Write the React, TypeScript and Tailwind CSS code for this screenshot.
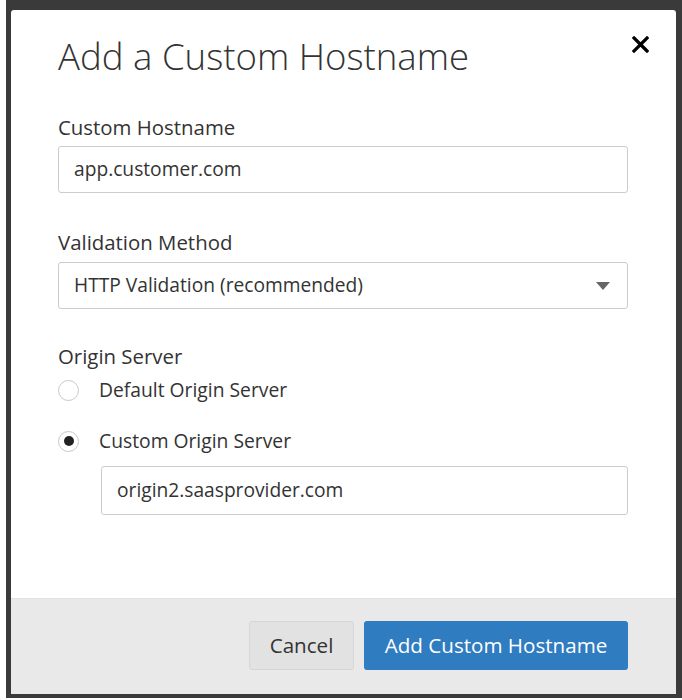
import { useState } from "react"

const font = { fontFamily: '"Open Sans", "Noto Sans", sans-serif' }

function Radio({ checked }: { checked: boolean }) {
    return (
        <span className="w-[21px] h-[21px] rounded-full border border-[#c8c8c8] bg-white flex items-center justify-center shrink-0">
            {checked && <span className="w-[10px] h-[10px] rounded-full bg-[#222]" />}
        </span>
    )
}

export default function App() {
    const [origin, setOrigin] = useState("custom")

    return (
        <div className="w-[682px] h-[700px] bg-white pl-[6px] pb-[2px]" style={font}>
            <div className="w-full h-full bg-[#3a3a3a] pl-[5px] pt-[10px] pr-[6px] pb-[4px]">
                <div className="w-full h-full bg-white rounded-t-[3px] flex flex-col">
                    {/* Header */}
                    <div className="flex items-start justify-between pl-[47px] pr-[27px] pt-[26px]">
                        <h1 className="text-[36.6px] leading-[40px] text-[#333] font-light">Add a Custom Hostname</h1>
                        <button className="mt-[0px] w-[17px] h-[17px] text-black">
                            <svg viewBox="0 0 17 17" className="w-[17px] h-[17px]">
                                <path d="M2 2 L15 15 M15 2 L2 15" stroke="currentColor" strokeWidth="3.2" strokeLinecap="square" />
                            </svg>
                        </button>
                    </div>

                    {/* Body */}
                    <div className="flex-1 pl-[47px] pr-[48px] pt-[38px]">
                        <label className="block text-[20.4px] leading-[26px] text-[#333]">Custom Hostname</label>
                        <div className="mt-[6px] h-[47px] border border-[#ccc] rounded-[3px] flex items-center px-[15px] text-[19.2px] text-[#333]">
                            app.customer.com
                        </div>

                        <label className="block mt-[36px] text-[20.4px] leading-[26px] text-[#333]">Validation Method</label>
                        <div className="mt-[7px] h-[47px] border border-[#ccc] rounded-[3px] flex items-center justify-between pl-[15px] pr-[17px] text-[19.2px] text-[#333]">
                            <span>HTTP Validation (recommended)</span>
                            <svg viewBox="0 0 14 8" className="w-[14px] h-[8px]">
                                <path d="M0 0 L14 0 L7 8 Z" fill="#666" />
                            </svg>
                        </div>

                        <label className="block mt-[34px] text-[20.4px] leading-[26px] text-[#333]">Origin Server</label>
                        <div className="mt-[9px] flex items-center gap-[20px] cursor-pointer" onClick={() => setOrigin("default")}>
                            <Radio checked={origin === "default"} />
                            <span className="text-[19.3px] leading-[24px] text-[#333]">Default Origin Server</span>
                        </div>
                        <div className="mt-[27px] flex items-center gap-[20px] cursor-pointer" onClick={() => setOrigin("custom")}>
                            <Radio checked={origin === "custom"} />
                            <span className="text-[19.3px] leading-[24px] text-[#333]">Custom Origin Server</span>
                        </div>
                        <div className="mt-[13px] ml-[43px] h-[49px] border border-[#ccc] rounded-[3px] flex items-center px-[15px] text-[19.2px] text-[#333]">
                            origin2.saasprovider.com
                        </div>
                    </div>

                    {/* Footer */}
                    <div className="h-[96px] bg-[#e9e9e9] border-t border-[#e2e2e2] flex items-start justify-end gap-[10px] pt-[22px] pr-[48px]">
                        <button className="h-[49px] w-[105px] rounded-[3px] bg-[#e2e2e2] border border-[#d6d6d6] text-[20.6px] text-[#333]">Cancel</button>
                        <button className="h-[49px] w-[264px] rounded-[3px] bg-[#2f7cc1] text-[20.6px] text-white">Add Custom Hostname</button>
                    </div>
                </div>
            </div>
        </div>
    )
}
